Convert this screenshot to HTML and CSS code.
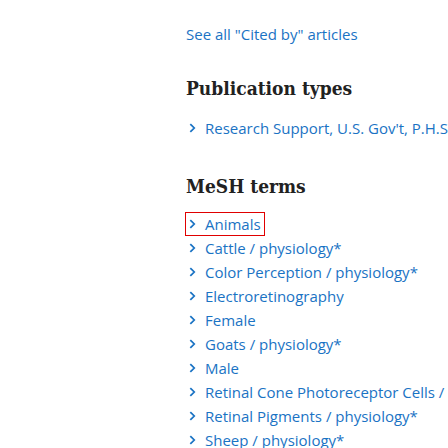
FILE: index.html
```html
<!DOCTYPE html>
<html>
<head>
<meta charset="utf-8">
<link rel="stylesheet" href="styles.css">
</head>
<body>
<main class="page">
  <div class="cited"><a href="#" class="link">See all "Cited by" articles</a></div>

  <section class="sec">
    <h2 class="title">Publication types</h2>
    <ul class="terms">
      <li><a href="#" class="term"><svg class="chev" viewBox="0 0 8 12"><path d="M1.5 1.5 L6 6 L1.5 10.5"/></svg><span>Research Support, U.S. Gov't, P.H.S.</span></a></li>
    </ul>
  </section>

  <section class="sec">
    <h2 class="title">MeSH terms</h2>
    <ul class="terms">
      <li><a href="#" class="term focused"><svg class="chev" viewBox="0 0 8 12"><path d="M1.5 1.5 L6 6 L1.5 10.5"/></svg><span>Animals</span></a></li>
      <li><a href="#" class="term"><svg class="chev" viewBox="0 0 8 12"><path d="M1.5 1.5 L6 6 L1.5 10.5"/></svg><span>Cattle / physiology*</span></a></li>
      <li><a href="#" class="term"><svg class="chev" viewBox="0 0 8 12"><path d="M1.5 1.5 L6 6 L1.5 10.5"/></svg><span>Color Perception / physiology*</span></a></li>
      <li><a href="#" class="term"><svg class="chev" viewBox="0 0 8 12"><path d="M1.5 1.5 L6 6 L1.5 10.5"/></svg><span>Electroretinography</span></a></li>
      <li><a href="#" class="term"><svg class="chev" viewBox="0 0 8 12"><path d="M1.5 1.5 L6 6 L1.5 10.5"/></svg><span>Female</span></a></li>
      <li><a href="#" class="term"><svg class="chev" viewBox="0 0 8 12"><path d="M1.5 1.5 L6 6 L1.5 10.5"/></svg><span>Goats / physiology*</span></a></li>
      <li><a href="#" class="term"><svg class="chev" viewBox="0 0 8 12"><path d="M1.5 1.5 L6 6 L1.5 10.5"/></svg><span>Male</span></a></li>
      <li><a href="#" class="term"><svg class="chev" viewBox="0 0 8 12"><path d="M1.5 1.5 L6 6 L1.5 10.5"/></svg><span>Retinal Cone Photoreceptor Cells / physiology*</span></a></li>
      <li><a href="#" class="term"><svg class="chev" viewBox="0 0 8 12"><path d="M1.5 1.5 L6 6 L1.5 10.5"/></svg><span>Retinal Pigments / physiology*</span></a></li>
      <li><a href="#" class="term"><svg class="chev" viewBox="0 0 8 12"><path d="M1.5 1.5 L6 6 L1.5 10.5"/></svg><span>Sheep / physiology*</span></a></li>
    </ul>
  </section>
</main>
</body>
</html>
```
FILE: styles.css
```css
html, body {
  margin: 0;
  padding: 0;
  background: #ffffff;
  overflow: hidden;
}
.page {
  width: 448px;
  height: 448px;
  overflow: hidden;
  box-sizing: border-box;
  padding: 22px 0 0 186px;
  font-family: "Open Sans", "Noto Sans", sans-serif;
  font-size: 15px;
  white-space: nowrap;
}
.link, .term {
  color: #1a73c4;
  text-decoration: none;
}
.cited {
  line-height: 24px;
}
.sec {
  margin-top: 28px;
}
.sec + .sec {
  margin-top: 32px;
}
.title {
  margin: 0;
  font-family: "DejaVu Serif Condensed", "DejaVu Serif", serif;
  font-stretch: condensed;
  font-weight: bold;
  font-size: 19px;
  line-height: 28px;
  color: #212121;
}
.terms {
  list-style: none;
  margin: 14px 0 0 0;
  padding: 0;
}
.sec + .sec .terms {
  margin-top: 12px;
}
.terms li {
  display: flex;
  align-items: center;
  height: 24px;
}
.term {
  display: inline-flex;
  align-items: center;
  gap: 9px;
  padding: 0 3px;
  height: 22px;
  line-height: 22px;
}
.focused {
  outline: 1px solid #e00000;
}
.chev {
  width: 7px;
  height: 12px;
  fill: none;
  stroke: #1a73c4;
  stroke-width: 2;
}
```
